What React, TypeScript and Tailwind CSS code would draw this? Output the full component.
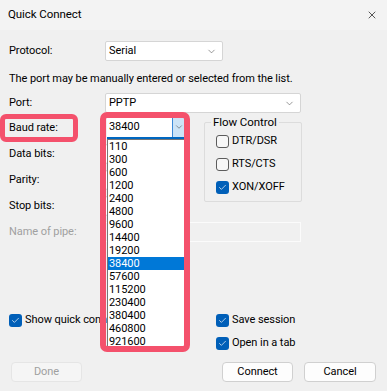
import { ChevronDown, Check, X } from "lucide-react"

const bauds = ["110", "300", "600", "1200", "2400", "4800", "9600", "14400", "19200", "38400", "57600", "115200", "230400", "380400", "460800", "921600"]

function Box({ checked }: { checked?: boolean }) {
  return checked ? (
    <span className="flex h-[13px] w-[13px] shrink-0 items-center justify-center rounded-[3px] bg-[#005fb8]">
      <Check className="h-[9px] w-[9px] text-white" strokeWidth={1.8} />
    </span>
  ) : (
    <span className="h-[13px] w-[13px] shrink-0 rounded-[3px] border border-[#5c5c5c] bg-[#f7f7f7]" />
  )
}

function CheckRow({ label, checked }: { label: string; checked?: boolean }) {
  return (
    <div className="flex h-[23px] items-center gap-[3px] whitespace-nowrap">
      <Box checked={checked} />
      <span>{label}</span>
    </div>
  )
}

function Combo({ width }: { width: string }) {
  return <div className={`h-[20px] rounded-[2px] border border-[#d5d5d5] bg-white ${width}`} />
}

function Btn({ label, disabled, w }: { label: string; disabled?: boolean; w: string }) {
  return (
    <div
      className={`flex h-[20px] items-center justify-center rounded-[4px] border ${w} ${
        disabled ? "border-[#e5e5e5] bg-[#f5f5f5] text-[#a0a0a0]" : "border-[#d0d0d0] bg-[#fdfdfd] text-black"
      }`}
    >
      {label}
    </div>
  )
}

export default function App() {
  return (
    <div
      className="relative h-[391px] w-[387px] overflow-hidden bg-[#f0f0f0] text-[11px] tracking-[-0.07px] text-black"
      style={{ fontFamily: 'Roboto, "Liberation Sans", sans-serif' }}
    >
      {/* title bar */}
      <div className="flex h-[30px] items-center justify-between bg-[#f3f3f3] pl-[8px] pr-[9px]">
        <span className="text-[11.5px]">Quick Connect</span>
        <X className="h-[12px] w-[12px]" strokeWidth={1.3} />
      </div>

      <div className="px-[9px] pt-[11px]">
        {/* protocol */}
        <div className="flex h-[20px] items-center">
          <span className="w-[96px]">Protocol:</span>
          <div className="flex h-[20px] w-[118px] items-center justify-between rounded-[2px] border border-[#d5d5d5] bg-white pl-[3px] pr-[5px]">
            <span>Serial</span>
            <ChevronDown className="h-[11px] w-[11px] text-[#555]" strokeWidth={1.3} />
          </div>
        </div>

        <div className="mt-[10px] h-[16px] leading-[16px]">The port may be manually entered or selected from the list.</div>

        {/* port */}
        <div className="mt-[6px] flex h-[20px] items-center">
          <span className="w-[96px]">Port:</span>
          <div className="flex h-[20px] w-[196px] items-center justify-between rounded-[2px] border border-[#d5d5d5] bg-white pl-[3px] pr-[5px]">
            <span>PPTP</span>
            <ChevronDown className="h-[11px] w-[11px] text-[#555]" strokeWidth={1.3} />
          </div>
        </div>

        {/* serial settings */}
        <div className="mt-[2px] flex">
          <div className="w-[195px]">
            <div className="flex h-[26px] items-center">
              <span className="w-[98px]">Baud rate:</span>
              <div className="relative">
                <div className="flex h-[22px] w-[78px] items-stretch border-b-2 border-[#0067c0] bg-white">
                  <span className="flex flex-1 items-center pl-[2px]">38400</span>
                  <span className="flex w-[13px] items-center justify-center border-l border-[#3c8ad8] bg-[#cce4f7]">
                    <ChevronDown className="h-[10px] w-[10px] text-[#444]" strokeWidth={1.3} />
                  </span>
                </div>
                <div className="absolute left-0 top-[22px] z-10 w-[78px] border border-[#767676] bg-white">
                  {bauds.map((b, i) => (
                    <div
                      key={b}
                      className={`h-[13px] pl-[1px] leading-[13px] ${i === 9 ? "bg-[#0078d7] text-white" : "text-black"}`}
                    >
                      {b}
                    </div>
                  ))}
                </div>
              </div>
            </div>
            <div className="flex h-[26px] items-center">
              <span className="w-[96px]">Data bits:</span>
              <Combo width="w-[80px]" />
            </div>
            <div className="flex h-[26px] items-center">
              <span className="w-[96px]">Parity:</span>
              <Combo width="w-[80px]" />
            </div>
            <div className="flex h-[26px] items-center">
              <span className="w-[96px]">Stop bits:</span>
              <Combo width="w-[80px]" />
            </div>
          </div>

          {/* flow control */}
          <div className="relative mt-[7px] h-[80px] w-[98px] rounded-[2px] border border-[#dcdcdc] px-[11px] pt-[7px]">
            <span className="absolute -top-[9px] left-[6px] bg-[#f0f0f0] px-[2px] text-[11.5px]">Flow Control</span>
            <CheckRow label="DTR/DSR" />
            <CheckRow label="RTS/CTS" />
            <CheckRow label="XON/XOFF" checked />
          </div>
        </div>

        <div className="flex h-[26px] items-center">
          <span className="w-[96px] text-[#a0a0a0]">Name of pipe:</span>
          <div className="h-[20px] w-[196px] border border-[#fbfbfb] bg-[#f0f0f0]" />
        </div>

        {/* options */}
        <div className="mt-[64px] grid grid-cols-[207px_1fr]">
          <CheckRow label="Show quick connect on startup" checked />
          <CheckRow label="Save session" checked />
          <div />
          <CheckRow label="Open in a tab" checked />
        </div>

        <div className="mt-[7px] flex items-center">
          <div className="ml-[2px]">
            <Btn label="Done" disabled w="w-[71px]" />
          </div>
          <div className="ml-[140px]">
            <Btn label="Connect" w="w-[71px]" />
          </div>
          <div className="ml-[11px]">
            <Btn label="Cancel" w="w-[72px]" />
          </div>
        </div>
      </div>

      {/* annotation highlights */}
      <div className="pointer-events-none absolute left-0 top-[114px] z-20 h-[28px] w-[78px] rounded-[6px] border-[5px] border-[#f4516c]" />
      <div className="pointer-events-none absolute left-[100px] top-[112px] z-20 h-[240px] w-[90px] rounded-[7px] border-[6px] border-[#f4516c]" />
    </div>
  )
}
